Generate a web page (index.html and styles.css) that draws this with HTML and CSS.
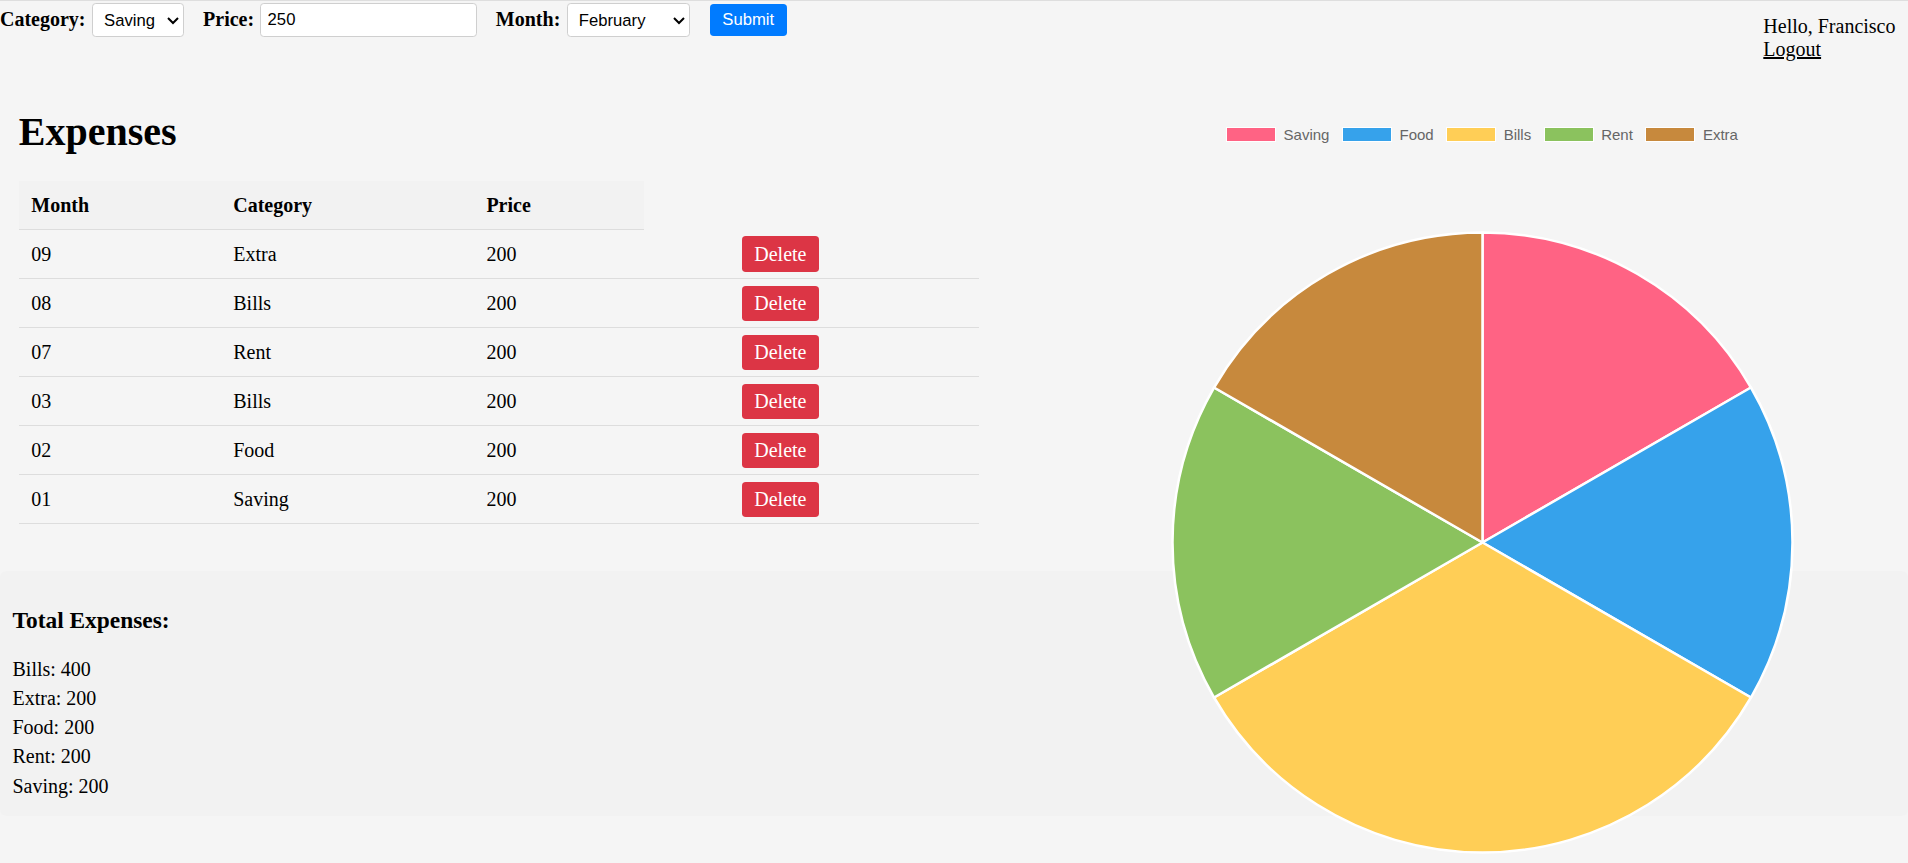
FILE: index.html
```html
<!DOCTYPE html>
<html lang="en">
<head>
<meta charset="utf-8">
<title>Expenses</title>
<link rel="stylesheet" href="styles.css">
</head>
<body>
<header class="topbar">
  <form class="filter-form">
    <label class="field-label">Category:</label>
    <select class="field field-category">
      <option selected>Saving</option>
      <option>Food</option>
      <option>Bills</option>
      <option>Rent</option>
      <option>Extra</option>
    </select>
    <label class="field-label">Price:</label>
    <input class="field field-price" type="text" value="250">
    <label class="field-label">Month:</label>
    <select class="field field-month">
      <option>January</option>
      <option selected>February</option>
      <option>March</option>
      <option>April</option>
      <option>May</option>
      <option>June</option>
      <option>July</option>
      <option>August</option>
      <option>September</option>
      <option>October</option>
      <option>November</option>
      <option>December</option>
    </select>
    <button class="btn-submit" type="button">Submit</button>
  </form>
  <div class="user">
    <div class="user-name">Hello, Francisco</div>
    <a class="user-logout" href="#">Logout</a>
  </div>
</header>

<main class="content">
  <div class="chart">
    <div class="legend">
      <span class="legend-item"><span class="legend-box saving"></span>Saving</span>
      <span class="legend-item"><span class="legend-box food"></span>Food</span>
      <span class="legend-item"><span class="legend-box bills"></span>Bills</span>
      <span class="legend-item"><span class="legend-box rent"></span>Rent</span>
      <span class="legend-item"><span class="legend-box extra"></span>Extra</span>
    </div>
    <svg class="pie" width="500" height="500" viewBox="0 0 500 500">
      <g stroke="#ffffff" stroke-width="2" stroke-linejoin="round">
        <path fill="#ff6384" d="M250 250 L250 2 A248 248 0 0 1 464.77 126 Z"/>
        <path fill="#36a2eb" d="M250 250 L464.77 126 A248 248 0 0 1 464.77 374 Z"/>
        <path fill="#ffce56" d="M250 250 L464.77 374 A248 248 0 0 1 35.23 374 Z"/>
        <path fill="#8bc25e" d="M250 250 L35.23 374 A248 248 0 0 1 35.23 126 Z"/>
        <path fill="#c7893d" d="M250 250 L35.23 126 A248 248 0 0 1 250 2 Z"/>
      </g>
    </svg>
  </div>

  <h1 class="title">Expenses</h1>
  <table class="expenses">
    <colgroup>
      <col class="col-month">
      <col class="col-category">
      <col class="col-price">
      <col class="col-action">
    </colgroup>
    <thead>
      <tr><th>Month</th><th>Category</th><th>Price</th></tr>
    </thead>
    <tbody>
      <tr><td>09</td><td>Extra</td><td>200</td><td class="action"><button class="btn-delete" type="button">Delete</button></td></tr>
      <tr><td>08</td><td>Bills</td><td>200</td><td class="action"><button class="btn-delete" type="button">Delete</button></td></tr>
      <tr><td>07</td><td>Rent</td><td>200</td><td class="action"><button class="btn-delete" type="button">Delete</button></td></tr>
      <tr><td>03</td><td>Bills</td><td>200</td><td class="action"><button class="btn-delete" type="button">Delete</button></td></tr>
      <tr><td>02</td><td>Food</td><td>200</td><td class="action"><button class="btn-delete" type="button">Delete</button></td></tr>
      <tr><td>01</td><td>Saving</td><td>200</td><td class="action"><button class="btn-delete" type="button">Delete</button></td></tr>
    </tbody>
  </table>
</main>

<section class="totals">
  <h3 class="totals-title">Total Expenses:</h3>
  <div class="totals-item">Bills: 400</div>
  <div class="totals-item">Extra: 200</div>
  <div class="totals-item">Food: 200</div>
  <div class="totals-item">Rent: 200</div>
  <div class="totals-item">Saving: 200</div>
</section>
</body>
</html>
```

FILE: styles.css
```css
html {
  zoom: 1.25;
}

body {
  margin: 0;
  background: #f5f5f5;
  color: #000;
  font-family: "Liberation Serif", "Times New Roman", serif;
  font-size: 16px;
}

/* ---------- top bar ---------- */
.topbar {
  display: flex;
  justify-content: space-between;
  align-items: flex-start;
  border-top: 1px solid #dedede;
}

.filter-form {
  display: flex;
  align-items: center;
  height: 30px;
}

.field-label {
  font-weight: bold;
  margin-right: 5px;
}

.field {
  box-sizing: border-box;
  font-family: "Liberation Sans", Arial, sans-serif;
  font-size: 13.333px;
  color: #000;
  background: #fff;
  border: 1px solid #cfcfcf;
  border-radius: 3px;
  padding: 5px;
  margin: 0 15px 0 0;
}

.field-category {
  width: 74px;
  height: 27.6px;
}

.field-price {
  width: 173.4px;
  height: 26.8px;
  outline: none;
}

.field-month {
  width: 98.6px;
  height: 27.6px;
  margin-right: 16px;
}

.btn-submit {
  height: 25.4px;
  padding: 0 10px;
  border: none;
  border-radius: 3px;
  background: #007bff;
  color: #fff;
  font-family: "Liberation Sans", Arial, sans-serif;
  font-size: 13.333px;
}

.user {
  padding: 11px 10px 0 0;
}

.user-logout {
  color: #000;
}

/* ---------- main ---------- */
.content {
  padding: 16px 15px 15px;
}

.chart {
  float: right;
  width: 500px;
  margin-right: 75.8px;
}

.legend {
  display: flex;
  justify-content: center;
  margin-top: 36.5px;
  font-family: "Liberation Sans", Arial, sans-serif;
  font-size: 12px;
  color: #666;
}

.legend-item {
  display: flex;
  align-items: center;
  margin-right: 10px;
}

.legend-item:last-child {
  margin-right: 0;
}

.legend-box {
  box-sizing: border-box;
  width: 40px;
  height: 12px;
  border: 1px solid #fff;
  margin-right: 6px;
}

.legend-box.saving { background: #ff6384; }
.legend-box.food { background: #36a2eb; }
.legend-box.bills { background: #ffce56; }
.legend-box.rent { background: #8bc25e; }
.legend-box.extra { background: #c7893d; }

.pie {
  display: block;
  margin-top: 69px;
}

.title {
  font-size: 32px;
  margin: 21.44px 0;
}

.expenses {
  width: 768px;
  border-collapse: collapse;
}

.col-month { width: 161.6px; }
.col-category { width: 202.5px; }
.col-price { width: 135.9px; }
.col-action { width: 268px; }

.expenses th,
.expenses td {
  padding: 10px;
  text-align: left;
  border-bottom: 1px solid #dddddd;
}

.expenses th {
  background: #f2f2f2;
}

.expenses td.action {
  padding: 5px 10px 5px 78.4px;
}

.btn-delete {
  padding: 5px 10px;
  border: none;
  border-radius: 3px;
  background: #dc3545;
  color: #fff;
  font-family: inherit;
  font-size: 16px;
  line-height: normal;
}

/* ---------- totals ---------- */
.totals {
  margin-top: 22.6px;
  padding: 10px;
  background: #f2f2f2;
  border-radius: 5px;
}

.totals-title {
  font-size: 1.17em;
  margin: 18.72px 0;
}

.totals-item {
  margin-bottom: 5px;
}
```
